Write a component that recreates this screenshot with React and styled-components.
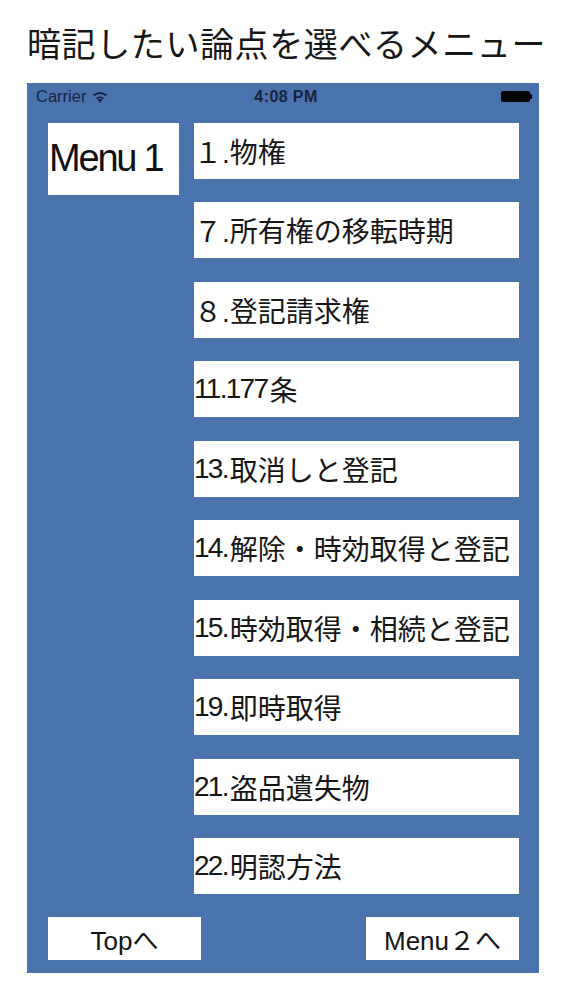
import React from 'react';
import styled, { createGlobalStyle } from 'styled-components';

const GlobalStyle = createGlobalStyle`
  html, body { margin: 0; padding: 0; background: #ffffff; }
  body { font-family: "Noto Sans CJK JP", sans-serif; }
`;

const Page = styled.div`
  width: 563px;
  height: 1000px;
  background: #ffffff;
  overflow: hidden;
`;

const Title = styled.h1`
  margin: 0 0 15px;
  padding: 18px 0 0 27px;
  height: 68px;
  box-sizing: border-box;
  font-family: "Noto Sans CJK JP", sans-serif;
  font-size: 34px;
  font-weight: 400;
  line-height: 50px;
  letter-spacing: 0.6px;
  color: #161616;
  white-space: nowrap;
`;

const Phone = styled.section`
  margin-left: 27px;
  width: 512px;
  height: 890px;
  box-sizing: border-box;
  padding-bottom: 13px;
  background: #4a72ad;
  display: flex;
  flex-direction: column;
`;

const StatusBar = styled.div`
  height: 28px;
  padding: 0 7px 0 9px;
  display: grid;
  grid-template-columns: 1fr auto 1fr;
  align-items: center;
  font-family: "Liberation Sans", Arial, sans-serif;
  color: #15233d;
`;

const Carrier = styled.div`
  display: flex;
  align-items: center;
  gap: 6px;
  font-size: 16.5px;
`;

const Clock = styled.div`
  font-size: 16px;
  font-weight: 700;
  letter-spacing: 0.4px;
  padding-left: 4px;
`;

const BatteryWrap = styled.div`
  display: flex;
  justify-content: flex-end;
  align-items: center;
`;

const Battery = styled.div`
  width: 29px;
  height: 11px;
  border-radius: 2px;
  background: #050505;
`;

const BatteryNub = styled.div`
  width: 2px;
  height: 5px;
  border-radius: 0 1px 1px 0;
  background: #050505;
`;

const Body = styled.div`
  display: grid;
  grid-template-columns: 131px 325px;
  column-gap: 15px;
  padding: 12px 20px 0 21px;
  align-items: start;
`;

const MenuTag = styled.div`
  height: 72px;
  background: #ffffff;
  display: flex;
  align-items: center;
  padding-left: 1px;
  font-family: "Liberation Sans", Arial, sans-serif;
  font-size: 38px;
  letter-spacing: -2.2px;
  color: #111111;
  white-space: nowrap;
`;

const List = styled.ul`
  margin: 0;
  padding: 0;
  list-style: none;
  display: flex;
  flex-direction: column;
  gap: 23.5px;
`;

const Item = styled.li`
  height: 56px;
  background: #ffffff;
  display: flex;
  align-items: center;
  font-family: "Noto Sans CJK JP", sans-serif;
  font-size: 28px;
  color: #161616;
  white-space: nowrap;
  overflow: hidden;
`;

const Num = styled.span`
  font-family: "Liberation Sans", "Noto Sans CJK JP", sans-serif;
  letter-spacing: ${(p) => (p.$wide ? '0' : '-1.7px')};
  margin-right: ${(p) => (p.$wide ? '0' : '2px')};
`;

const Footer = styled.div`
  margin-top: 23px;
  padding: 0 20px 0 21px;
  display: flex;
  justify-content: space-between;
`;

const FooterButton = styled.button`
  width: 153px;
  height: 43px;
  border: none;
  padding: 0;
  background: #ffffff;
  display: flex;
  align-items: center;
  justify-content: center;
  font-family: "Liberation Sans", "Noto Sans CJK JP", sans-serif;
  font-size: 26px;
  color: #141414;
  white-space: nowrap;
`;

const WifiIcon = () => (
  <svg width="16" height="12" viewBox="0 0 15 11" aria-hidden="true">
    <path d="M7.5 11 L5.2 8.3 A3.4 3.4 0 0 1 9.8 8.3 Z" fill="#15233d" />
    <path d="M3.6 6.4 A5.9 5.9 0 0 1 11.4 6.4 L10.3 7.7 A4.2 4.2 0 0 0 4.7 7.7 Z" fill="#15233d" />
    <path d="M0.9 3.4 A9.6 9.6 0 0 1 14.1 3.4 L12.9 4.8 A7.8 7.8 0 0 0 2.1 4.8 Z" fill="#15233d" />
  </svg>
);

const items = [
  { num: '１.', label: '物権', wide: true },
  { num: '７.', label: '所有権の移転時期', wide: true },
  { num: '８.', label: '登記請求権', wide: true },
  { num: '11.177', label: '条' },
  { num: '13.', label: '取消しと登記' },
  { num: '14.', label: '解除・時効取得と登記' },
  { num: '15.', label: '時効取得・相続と登記' },
  { num: '19.', label: '即時取得' },
  { num: '21.', label: '盗品遺失物' },
  { num: '22.', label: '明認方法' },
];

export default function App() {
  return (
    <Page>
      <GlobalStyle />
      <Title>暗記したい論点を選べるメニュー</Title>
      <Phone>
        <StatusBar>
          <Carrier>
            Carrier
            <WifiIcon />
          </Carrier>
          <Clock>4:08 PM</Clock>
          <BatteryWrap>
            <Battery />
            <BatteryNub />
          </BatteryWrap>
        </StatusBar>
        <Body>
          <MenuTag>Menu 1</MenuTag>
          <List>
            {items.map((it) => (
              <Item key={it.num + it.label}>
                <Num $wide={it.wide}>{it.num}</Num>
                {it.label}
              </Item>
            ))}
          </List>
        </Body>
        <Footer>
          <FooterButton>Topへ</FooterButton>
          <FooterButton>Menu２へ</FooterButton>
        </Footer>
      </Phone>
    </Page>
  );
}
